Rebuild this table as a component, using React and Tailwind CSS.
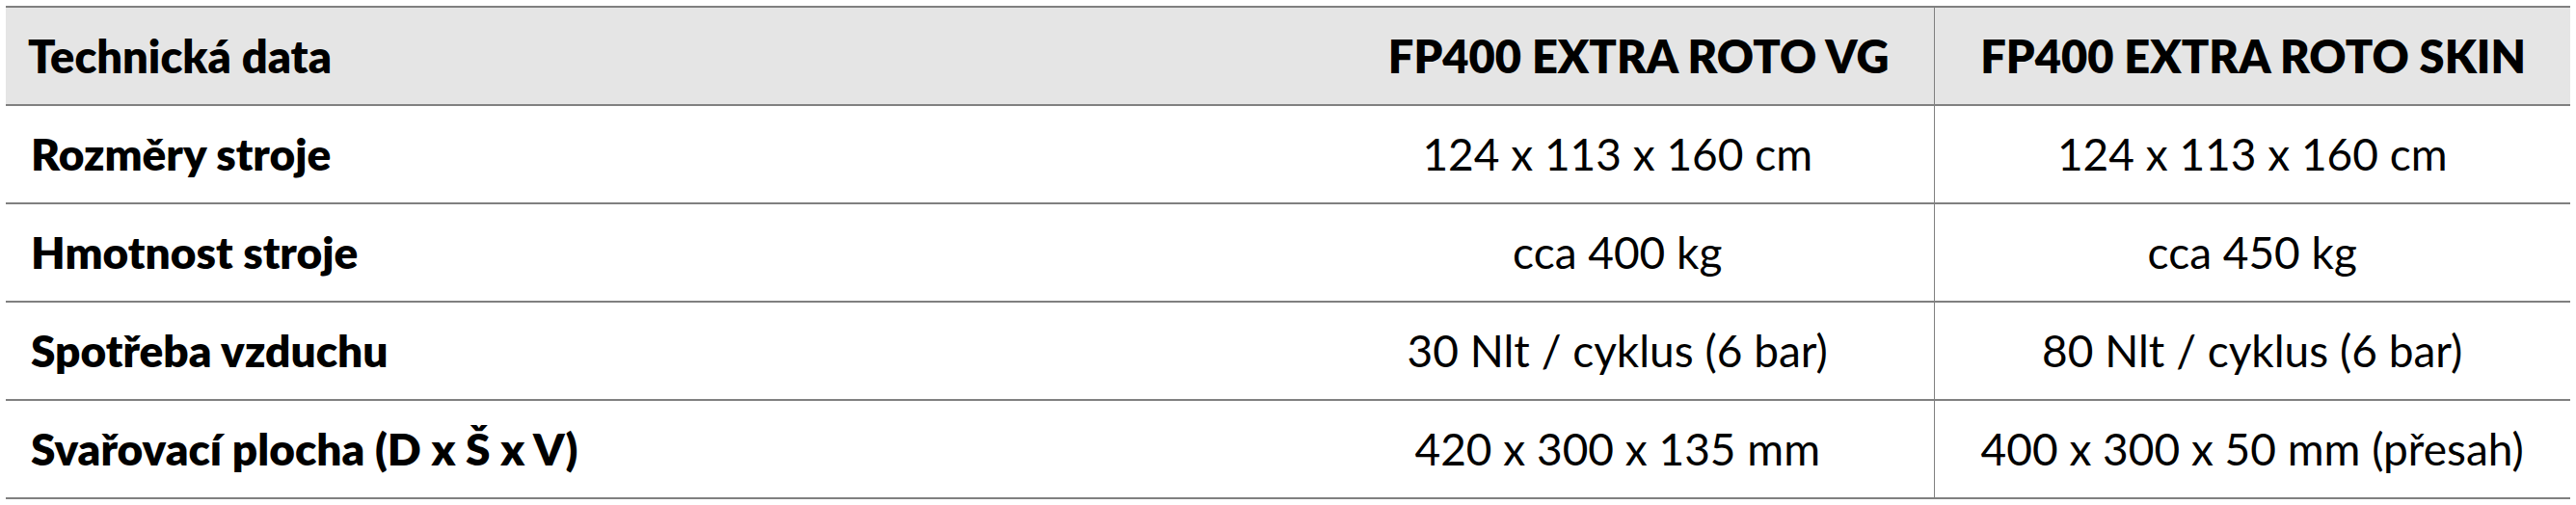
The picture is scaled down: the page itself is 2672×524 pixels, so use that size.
import React from 'react';

// Rows of the spec table: label, then one value per machine
const rows = [
  { label: 'Rozměry stroje', vg: '124 x 113 x 160 cm', skin: '124 x 113 x 160 cm' },
  { label: 'Hmotnost stroje', vg: 'cca 400 kg', skin: 'cca 450 kg' },
  { label: 'Spotřeba vzduchu', vg: '30 Nlt / cyklus (6 bar)', skin: '80 Nlt / cyklus (6 bar)' },
  { label: 'Svařovací plocha (D x Š x V)', vg: '420 x 300 x 135 mm', skin: '400 x 300 x 50 mm (přesah)' },
];

function App() {
  return (
    <div className="w-[2672px] h-[524px] bg-white px-[6px] pt-[6px] font-['Lato','Liberation_Sans',sans-serif] text-black">
      <table className="w-[2660px] table-fixed border-collapse text-[46px] leading-none">
        <colgroup>
          <col className="w-[1344px]" />
          <col className="w-[656px]" />
          <col className="w-[660px]" />
        </colgroup>
        <thead>
          <tr className="h-[102px] bg-[#e5e5e5] border-y-2 border-[#808080] text-[47px]">
            <th className="pl-[23px] text-left font-extrabold">Technická data</th>
            <th className="pr-[46px] text-right font-extrabold">FP400 EXTRA ROTO VG</th>
            <th className="pr-[46px] text-right font-extrabold border-l border-[#808080]">FP400 EXTRA ROTO SKIN</th>
          </tr>
        </thead>
        <tbody>
          {rows.map((row) => (
            <tr key={row.label} className="h-[102px] border-b-2 border-[#808080]">
              <td className="pl-[26px] text-left font-extrabold">{row.label}</td>
              <td className="text-center font-normal">{row.vg}</td>
              <td className="text-center font-normal border-l border-[#808080]">{row.skin}</td>
            </tr>
          ))}
        </tbody>
      </table>
    </div>
  );
}

export default App;
